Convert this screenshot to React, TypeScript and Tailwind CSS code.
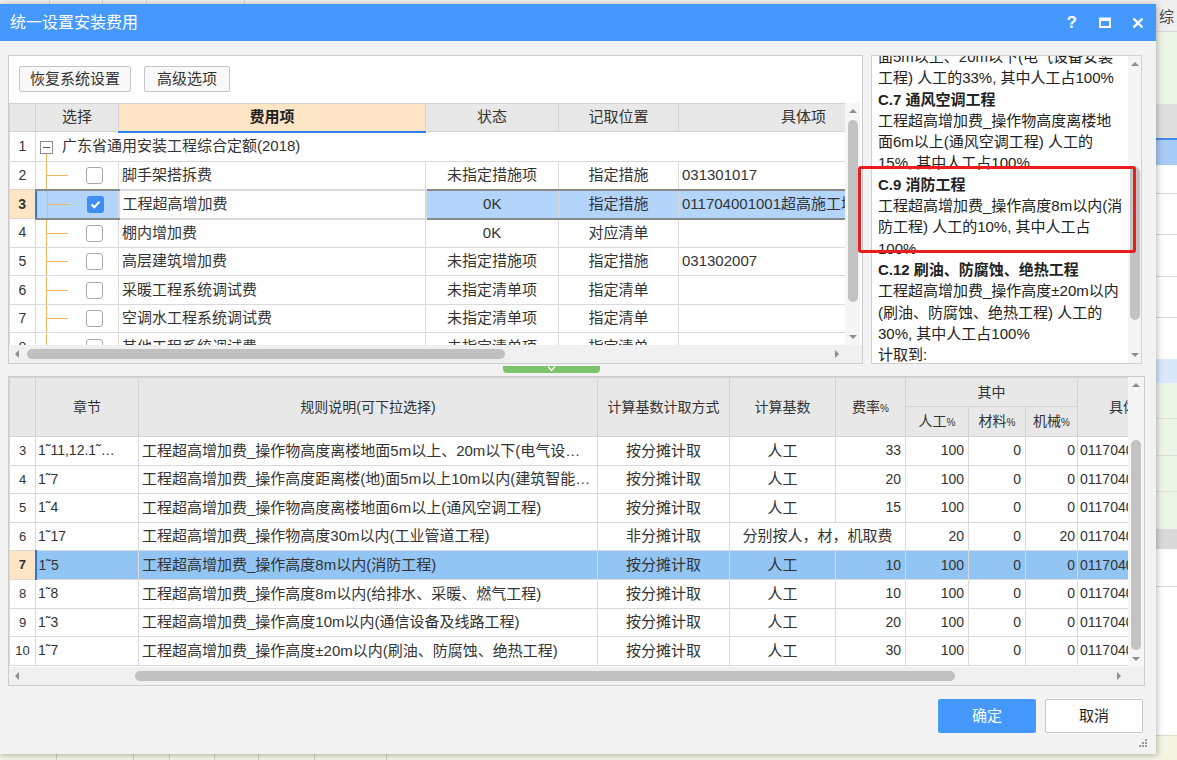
import React from "react";

type Dir = "up" | "down" | "left" | "right";

function Arrow({ dir }: { dir: Dir }) {
  const d = {
    up: "M1 7L5 3L9 7Z",
    down: "M1 3L5 7L9 3Z",
    left: "M7 1L3 5L7 9Z",
    right: "M3 1L7 5L3 9Z",
  }[dir];
  return (
    <svg width="10" height="10" viewBox="0 0 10 10">
      <path d={d} fill="#8e8e8e" />
    </svg>
  );
}

function VScroll({ thumb, width }: { thumb: string; width: string }) {
  return (
    <div className={`flex shrink-0 flex-col items-center bg-[#f5f5f5] ${width}`}>
      <div className="flex h-[16px] items-center justify-center">
        <Arrow dir="up" />
      </div>
      <div className="flex w-full flex-1 justify-center">
        <div className={`w-[10px] rounded-full bg-[#c3c3c3] ${thumb}`} />
      </div>
      <div className="flex h-[16px] items-center justify-center">
        <Arrow dir="down" />
      </div>
    </div>
  );
}

function HScroll({ thumb }: { thumb: string }) {
  return (
    <div className="flex h-[18px] shrink-0 items-center bg-[#f0f0f0]">
      <div className="flex w-[15px] justify-center">
        <Arrow dir="left" />
      </div>
      <div className="flex flex-1 items-center">
        <div className={`h-[10px] rounded-full bg-[#c0c0c0] ${thumb}`} />
      </div>
      <div className="flex w-[15px] justify-center">
        <Arrow dir="right" />
      </div>
      <div className="h-full w-[18px] bg-[#f0f0f0]" />
    </div>
  );
}

function Check({ checked }: { checked?: boolean }) {
  if (checked) {
    return (
      <div className="flex h-[17px] w-[17px] items-center justify-center rounded-[3px] bg-[#3d8ef0]">
        <svg width="11" height="9" viewBox="0 0 11 9">
          <path d="M1.5 4.5L4.3 7.2L9.5 1.6" stroke="#fff" strokeWidth="2" fill="none" />
        </svg>
      </div>
    );
  }
  return <div className="h-[17px] w-[17px] rounded-[3px] border border-[#a9a9a9] bg-white" />;
}

function TreeCheck({ checked }: { checked?: boolean }) {
  return (
    <div className="flex h-[27px] items-center">
      <div className="ml-[10px] flex h-full w-[22px] items-center border-l border-[#f5b35b]">
        <div className="h-px w-full bg-[#f5b35b]" />
      </div>
      <div className="ml-[18px]">
        <Check checked={checked} />
      </div>
    </div>
  );
}

const topRows = [
  { n: 2, name: "脚手架搭拆费", state: "未指定措施项", pos: "指定措施", item: "031301017" },
  { n: 3, name: "工程超高增加费", state: "0K", pos: "指定措施", item: "011704001001超高施工增加", sel: true },
  { n: 4, name: "棚内增加费", state: "0K", pos: "对应清单", item: "" },
  { n: 5, name: "高层建筑增加费", state: "未指定措施项", pos: "指定措施", item: "031302007" },
  { n: 6, name: "采暖工程系统调试费", state: "未指定清单项", pos: "指定清单", item: "" },
  { n: 7, name: "空调水工程系统调试费", state: "未指定清单项", pos: "指定清单", item: "" },
  { n: 8, name: "其他工程系统调试费", state: "未指定清单项", pos: "指定清单", item: "" },
];

function TopTable() {
  const td = "border border-[#d9d9d9] p-0 whitespace-nowrap overflow-hidden";
  return (
    <table className="w-[919px] table-fixed border-collapse text-[15px]">
      <colgroup>
        <col className="w-[26px]" />
        <col className="w-[83px]" />
        <col className="w-[307px]" />
        <col className="w-[133px]" />
        <col className="w-[120px]" />
        <col className="w-[250px]" />
      </colgroup>
      <thead>
        <tr className="h-[28px]">
          <th className="border border-[#d3d3d3] bg-[#e8e8e8]" />
          <th className="border border-[#d3d3d3] bg-[#e8e8e8] font-normal">选择</th>
          <th className="border border-[#d3d3d3] border-b-2 border-b-[#2f7de6] bg-[#fde5c6] font-bold text-[#222]">费用项</th>
          <th className="border border-[#d3d3d3] bg-[#e8e8e8] font-normal">状态</th>
          <th className="border border-[#d3d3d3] bg-[#e8e8e8] font-normal">记取位置</th>
          <th className="border border-[#d3d3d3] bg-[#e8e8e8] font-normal">具体项</th>
        </tr>
      </thead>
      <tbody>
        <tr className="h-[29px]">
          <td className={`${td} text-center text-[14px]`}>1</td>
          <td colSpan={5} className={td}>
            <div className="flex h-[28px]">
              <div className="ml-[4px] flex w-[13px] flex-col items-center pt-[8px]">
                <div className="flex h-[13px] w-[13px] shrink-0 items-center justify-center border border-[#8c8c8c] bg-white">
                  <div className="h-px w-[7px] bg-[#555]" />
                </div>
                <div className="w-px flex-1 bg-[#f5b35b]" />
              </div>
              <span className="ml-[9px] self-center">广东省通用安装工程综合定额(2018)</span>
            </div>
          </td>
        </tr>
        {topRows.map((r) => {
          const sel = r.sel;
          const rowBg = sel ? "bg-[#b4d5fb] border-y-2 border-y-[#8a8a8a]" : "bg-white";
          return (
            <tr key={r.n} className={sel ? "h-[28px]" : "h-[28.6px]"}>
              <td className={`${td} text-center text-[14px] ${sel ? "bg-[#fde5c6] font-bold" : "bg-white"}`}>{r.n}</td>
              <td className={`${td} ${rowBg} ${sel ? "border-l-2 border-l-[#2a79e2]" : ""}`}>
                <TreeCheck checked={sel} />
              </td>
              <td className={`${td} px-[3px] ${sel ? "border-2 border-[#7c7c7c] bg-white" : "bg-white"}`}>{r.name}</td>
              <td className={`${td} text-center ${rowBg}`}>{r.state}</td>
              <td className={`${td} text-center ${rowBg}`}>{r.pos}</td>
              <td className={`${td} px-[3px] ${rowBg}`}>{r.item}</td>
            </tr>
          );
        })}
      </tbody>
    </table>
  );
}

const bottomRows = [
  { n: 3, ch: "1˜11,12.1˜…", rule: "工程超高增加费_操作物高度离楼地面5m以上、20m以下(电气设备安装工程)", way: "按分摊计取", base: "人工", rate: "33", rg: "100", cl: "0", jx: "0" },
  { n: 4, ch: "1˜7", rule: "工程超高增加费_操作高度距离楼(地)面5m以上10m以内(建筑智能化工程)", way: "按分摊计取", base: "人工", rate: "20", rg: "100", cl: "0", jx: "0" },
  { n: 5, ch: "1˜4", rule: "工程超高增加费_操作物高度离楼地面6m以上(通风空调工程)", way: "按分摊计取", base: "人工", rate: "15", rg: "100", cl: "0", jx: "0" },
  { n: 6, ch: "1˜17", rule: "工程超高增加费_操作物高度30m以内(工业管道工程)", way: "非分摊计取", base: "分别按人，材，机取费", rate: "", rg: "20", cl: "0", jx: "20", span: true },
  { n: 7, ch: "1˜5", rule: "工程超高增加费_操作高度8m以内(消防工程)", way: "按分摊计取", base: "人工", rate: "10", rg: "100", cl: "0", jx: "0", sel: true },
  { n: 8, ch: "1˜8", rule: "工程超高增加费_操作高度8m以内(给排水、采暖、燃气工程)", way: "按分摊计取", base: "人工", rate: "10", rg: "100", cl: "0", jx: "0" },
  { n: 9, ch: "1˜3", rule: "工程超高增加费_操作高度10m以内(通信设备及线路工程)", way: "按分摊计取", base: "人工", rate: "20", rg: "100", cl: "0", jx: "0" },
  { n: 10, ch: "1˜7", rule: "工程超高增加费_操作高度±20m以内(刷油、防腐蚀、绝热工程)", way: "按分摊计取", base: "人工", rate: "30", rg: "100", cl: "0", jx: "0" },
];

function BottomTable() {
  const th = "border border-[#d3d3d3] bg-[#e8e8e8] font-normal text-[14px] text-[#333]";
  const td = "border border-[#d9d9d9] p-0 whitespace-nowrap overflow-hidden";
  return (
    <table className="w-[1173px] table-fixed border-collapse text-[15px]">
      <colgroup>
        <col className="w-[26px]" />
        <col className="w-[103px]" />
        <col className="w-[459px]" />
        <col className="w-[132px]" />
        <col className="w-[106px]" />
        <col className="w-[70px]" />
        <col className="w-[63px]" />
        <col className="w-[57px]" />
        <col className="w-[52px]" />
        <col className="w-[105px]" />
      </colgroup>
      <thead>
        <tr className="h-[29px]">
          <th rowSpan={2} className={th} />
          <th rowSpan={2} className={th}>章节</th>
          <th rowSpan={2} className={th}>规则说明(可下拉选择)</th>
          <th rowSpan={2} className={th}>计算基数计取方式</th>
          <th rowSpan={2} className={th}>计算基数</th>
          <th rowSpan={2} className={th}>
            费率<span className="text-[10px]">%</span>
          </th>
          <th colSpan={3} className={th}>其中</th>
          <th rowSpan={2} className={th}>具体项</th>
        </tr>
        <tr className="h-[30px]">
          <th className={th}>
            人工<span className="text-[10px]">%</span>
          </th>
          <th className={th}>
            材料<span className="text-[10px]">%</span>
          </th>
          <th className={th}>
            机械<span className="text-[10px]">%</span>
          </th>
        </tr>
      </thead>
      <tbody>
        {bottomRows.map((r) => {
          const bg = r.sel ? "bg-[#92c5f3]" : "bg-white";
          return (
            <tr key={r.n} className="h-[28.6px]">
              <td className={`${td} text-center text-[13px] ${r.sel ? "bg-[#fde5c6] font-bold" : "bg-white"}`}>{r.n}</td>
              <td className={`${td} px-[2px] text-[14px] ${bg} ${r.sel ? "border-l-2 border-l-[#2a79e2]" : ""}`}>{r.ch}</td>
              <td className={`${td} px-[3px] text-ellipsis ${bg}`}>{r.rule}</td>
              <td className={`${td} text-center ${bg}`}>{r.way}</td>
              {r.span ? (
                <td colSpan={2} className={`${td} text-center ${bg}`}>{r.base}</td>
              ) : (
                <>
                  <td className={`${td} text-center ${bg}`}>{r.base}</td>
                  <td className={`${td} pr-[4px] text-right text-[14px] ${bg}`}>{r.rate}</td>
                </>
              )}
              <td className={`${td} pr-[4px] text-right text-[14px] ${bg}`}>{r.rg}</td>
              <td className={`${td} pr-[4px] text-right text-[14px] ${bg}`}>{r.cl}</td>
              <td className={`${td} pr-[2px] text-right text-[14px] ${bg}`}>{r.jx}</td>
              <td className={`${td} px-[2px] text-[14px] ${bg}`}>011704001001</td>
            </tr>
          );
        })}
      </tbody>
    </table>
  );
}

const notes: { t: string; b?: boolean }[] = [
  { t: "面5m以上、20m以下(电气设备安装" },
  { t: "工程) 人工的33%, 其中人工占100%" },
  { t: "C.7 通风空调工程", b: true },
  { t: "工程超高增加费_操作物高度离楼地" },
  { t: "面6m以上(通风空调工程) 人工的" },
  { t: "15%, 其中人工占100%" },
  { t: "C.9 消防工程", b: true },
  { t: "工程超高增加费_操作高度8m以内(消" },
  { t: "防工程) 人工的10%, 其中人工占" },
  { t: "100%" },
  { t: "C.12 刷油、防腐蚀、绝热工程", b: true },
  { t: "工程超高增加费_操作高度±20m以内" },
  { t: "(刷油、防腐蚀、绝热工程) 人工的" },
  { t: "30%, 其中人工占100%" },
  { t: "计取到:" },
];

function Background() {
  return (
    <div className="flex h-full flex-col">
      <div className="flex h-[32px] shrink-0 border-b border-[#d6d6d6] bg-[#efefef]">
        <div className="w-[50px] border-r border-[#d0d0d0]" />
        <div className="w-[53px] border-r border-[#d0d0d0]" />
        <div className="w-[44px] border-r border-[#d0d0d0]" />
        <div className="w-[98px] border-r border-[#d0d0d0]" />
        <div className="flex-1 pl-[914px] pt-[6px] text-[15px] text-[#444]">综</div>
      </div>
      <div className="h-[72px] shrink-0 bg-[#edf5e8]" />
      <div className="h-[34px] shrink-0 bg-[#dedede]" />
      <div className="h-[27px] shrink-0 border-t-2 border-[#3f8ae6] bg-[#a7cbf4]" />
      <div className="h-[29px] shrink-0 border-b border-[#d6d6d6] bg-white" />
      <div className="h-[41px] shrink-0 border-b border-[#d6d6d6] bg-white" />
      <div className="h-[42px] shrink-0 border-b border-[#d6d6d6] bg-white" />
      <div className="h-[41px] shrink-0 border-b border-[#d6d6d6] bg-white" />
      <div className="h-[41px] shrink-0 bg-white" />
      <div className="h-[24px] shrink-0 bg-[#dae8fb]" />
      <div className="h-[36px] shrink-0 border-b border-[#d6e2d0] bg-[#edf5e8]" />
      <div className="h-[37px] shrink-0 border-b border-[#d6e2d0] bg-[#edf5e8]" />
      <div className="h-[36px] shrink-0 border-b border-[#d6e2d0] bg-[#edf5e8]" />
      <div className="h-[37px] shrink-0 bg-[#edf5e8]" />
      <div className="h-[20px] shrink-0 bg-[#d9d9d9]" />
      <div className="h-[38px] shrink-0 border-b border-[#d6d6d6] bg-white" />
      <div className="flex-1 bg-white" />
      <div className="flex h-[25px] shrink-0 border-t border-[#dcdcc8] bg-[#f4f4e3]">
        <div className="w-[57px] border-r border-[#cfcfbf]" />
        <div className="w-[77px] border-r border-[#cfcfbf]" />
        <div className="w-[36px] border-r border-[#cfcfbf]" />
        <div className="w-[45px] border-r border-[#cfcfbf]" />
        <div className="w-[44px] border-r border-[#cfcfbf]" />
        <div className="w-[56px] border-r border-[#cfcfbf]" />
        <div className="w-[72px] border-r border-[#cfcfbf]" />
      </div>
    </div>
  );
}

function TitleBar() {
  return (
    <div className="flex h-[37px] shrink-0 items-center bg-[#4599fe] pl-[10px] pr-[12px] text-white">
      <span className="text-[16px]">统一设置安装费用</span>
      <div className="ml-auto flex items-center">
        <span className="text-[17px] font-bold">?</span>
        <svg className="ml-[22px]" width="12" height="11" viewBox="0 0 12 11">
          <rect x="1" y="1.5" width="10" height="8.5" fill="none" stroke="#fff" strokeWidth="2" />
          <rect x="1" y="1" width="10" height="3" fill="#fff" />
        </svg>
        <svg className="ml-[21px]" width="12" height="12" viewBox="0 0 12 12">
          <path d="M1.5 1.5L10.5 10.5M10.5 1.5L1.5 10.5" stroke="#fff" strokeWidth="2.4" />
        </svg>
      </div>
    </div>
  );
}

export default function App() {
  return (
    <div className="relative h-[760px] w-[1177px] overflow-hidden bg-white font-['Liberation_Sans','Noto_Sans_CJK_SC',sans-serif] text-[#333]">
      <Background />
      <div className="absolute left-0 top-[4px] flex h-[750px] w-[1156px] flex-col bg-[#f3f3f3] shadow-[1px_1px_6px_rgba(0,0,0,0.3)]">
        <TitleBar />
        <div className="flex flex-col px-[8px] pt-[14px]">
          <div className="flex h-[309px] gap-[8px]">
            <div className="flex w-[855px] flex-col border border-[#cdcdcd] bg-white">
              <div className="flex h-[47px] shrink-0 gap-[13px] pl-[10px] pt-[10px]">
                <button className="h-[26px] w-[112px] rounded-[2px] border border-[#c6c6c6] bg-[#f8f8f8] text-[15px] text-[#333]">恢复系统设置</button>
                <button className="h-[26px] w-[86px] rounded-[2px] border border-[#c6c6c6] bg-[#f8f8f8] text-[15px] text-[#333]">高级选项</button>
              </div>
              <div className="flex h-[242px] shrink-0">
                <div className="w-[836px] overflow-hidden">
                  <TopTable />
                </div>
                <VScroll width="w-[15px]" thumb="mt-[1px] h-[182px]" />
              </div>
              <HScroll thumb="ml-[3px] w-[478px]" />
            </div>
            <div className="flex w-[271px] border border-[#d0d0d0] bg-white">
              <div className="flex-1 overflow-hidden pl-[6px]">
                <div className="-mt-[10px] text-[15px] leading-[21.3px] text-[#222]">
                  {notes.map((l, i) => (
                    <div key={i} className={`whitespace-nowrap ${l.b ? "font-bold" : ""}`}>
                      {l.t}
                    </div>
                  ))}
                </div>
              </div>
              <VScroll width="w-[13px]" thumb="mt-[95px] h-[153px]" />
            </div>
          </div>
          <div className="flex h-[12px] shrink-0">
            <div className="ml-[495px] mt-[2px] flex h-[7px] w-[97px] justify-center rounded-b-[4px] bg-[#7cc36a]">
              <svg width="9" height="6" viewBox="0 0 9 6">
                <path d="M1 0.5L4.5 4.5L8 0.5" stroke="#fff" strokeWidth="1.2" fill="none" />
              </svg>
            </div>
          </div>
          <div className="flex h-[310px] w-[1137px] flex-col border border-[#cdcdcd] bg-white">
            <div className="flex h-[290px] shrink-0">
              <div className="w-[1119px] overflow-hidden">
                <BottomTable />
              </div>
              <VScroll width="w-[16px]" thumb="mt-[47px] h-[210px]" />
            </div>
            <HScroll thumb="ml-[111px] w-[820px]" />
          </div>
          <div className="flex justify-end gap-[9px] pr-[5px] pt-[13px]">
            <button className="h-[34px] w-[98px] rounded-[2px] bg-[#4599fe] text-[15px] text-white">确定</button>
            <button className="h-[34px] w-[98px] rounded-[2px] border border-[#c8c8c8] bg-white text-[15px] text-[#222]">取消</button>
          </div>
          <div className="flex justify-end pr-[0px] pt-[5px]">
            <svg width="10" height="10" viewBox="0 0 10 10">
              <rect x="7" y="1" width="2" height="2" fill="#9a9a9a" />
              <rect x="4" y="4" width="2" height="2" fill="#9a9a9a" />
              <rect x="7" y="4" width="2" height="2" fill="#9a9a9a" />
              <rect x="1" y="7" width="2" height="2" fill="#9a9a9a" />
              <rect x="4" y="7" width="2" height="2" fill="#9a9a9a" />
              <rect x="7" y="7" width="2" height="2" fill="#9a9a9a" />
            </svg>
          </div>
        </div>
        <div className="absolute left-[858px] top-[162px] h-[87px] w-[278px] rounded-[3px] border-[3px] border-[#ee1d1d]" />
      </div>
    </div>
  );
}
